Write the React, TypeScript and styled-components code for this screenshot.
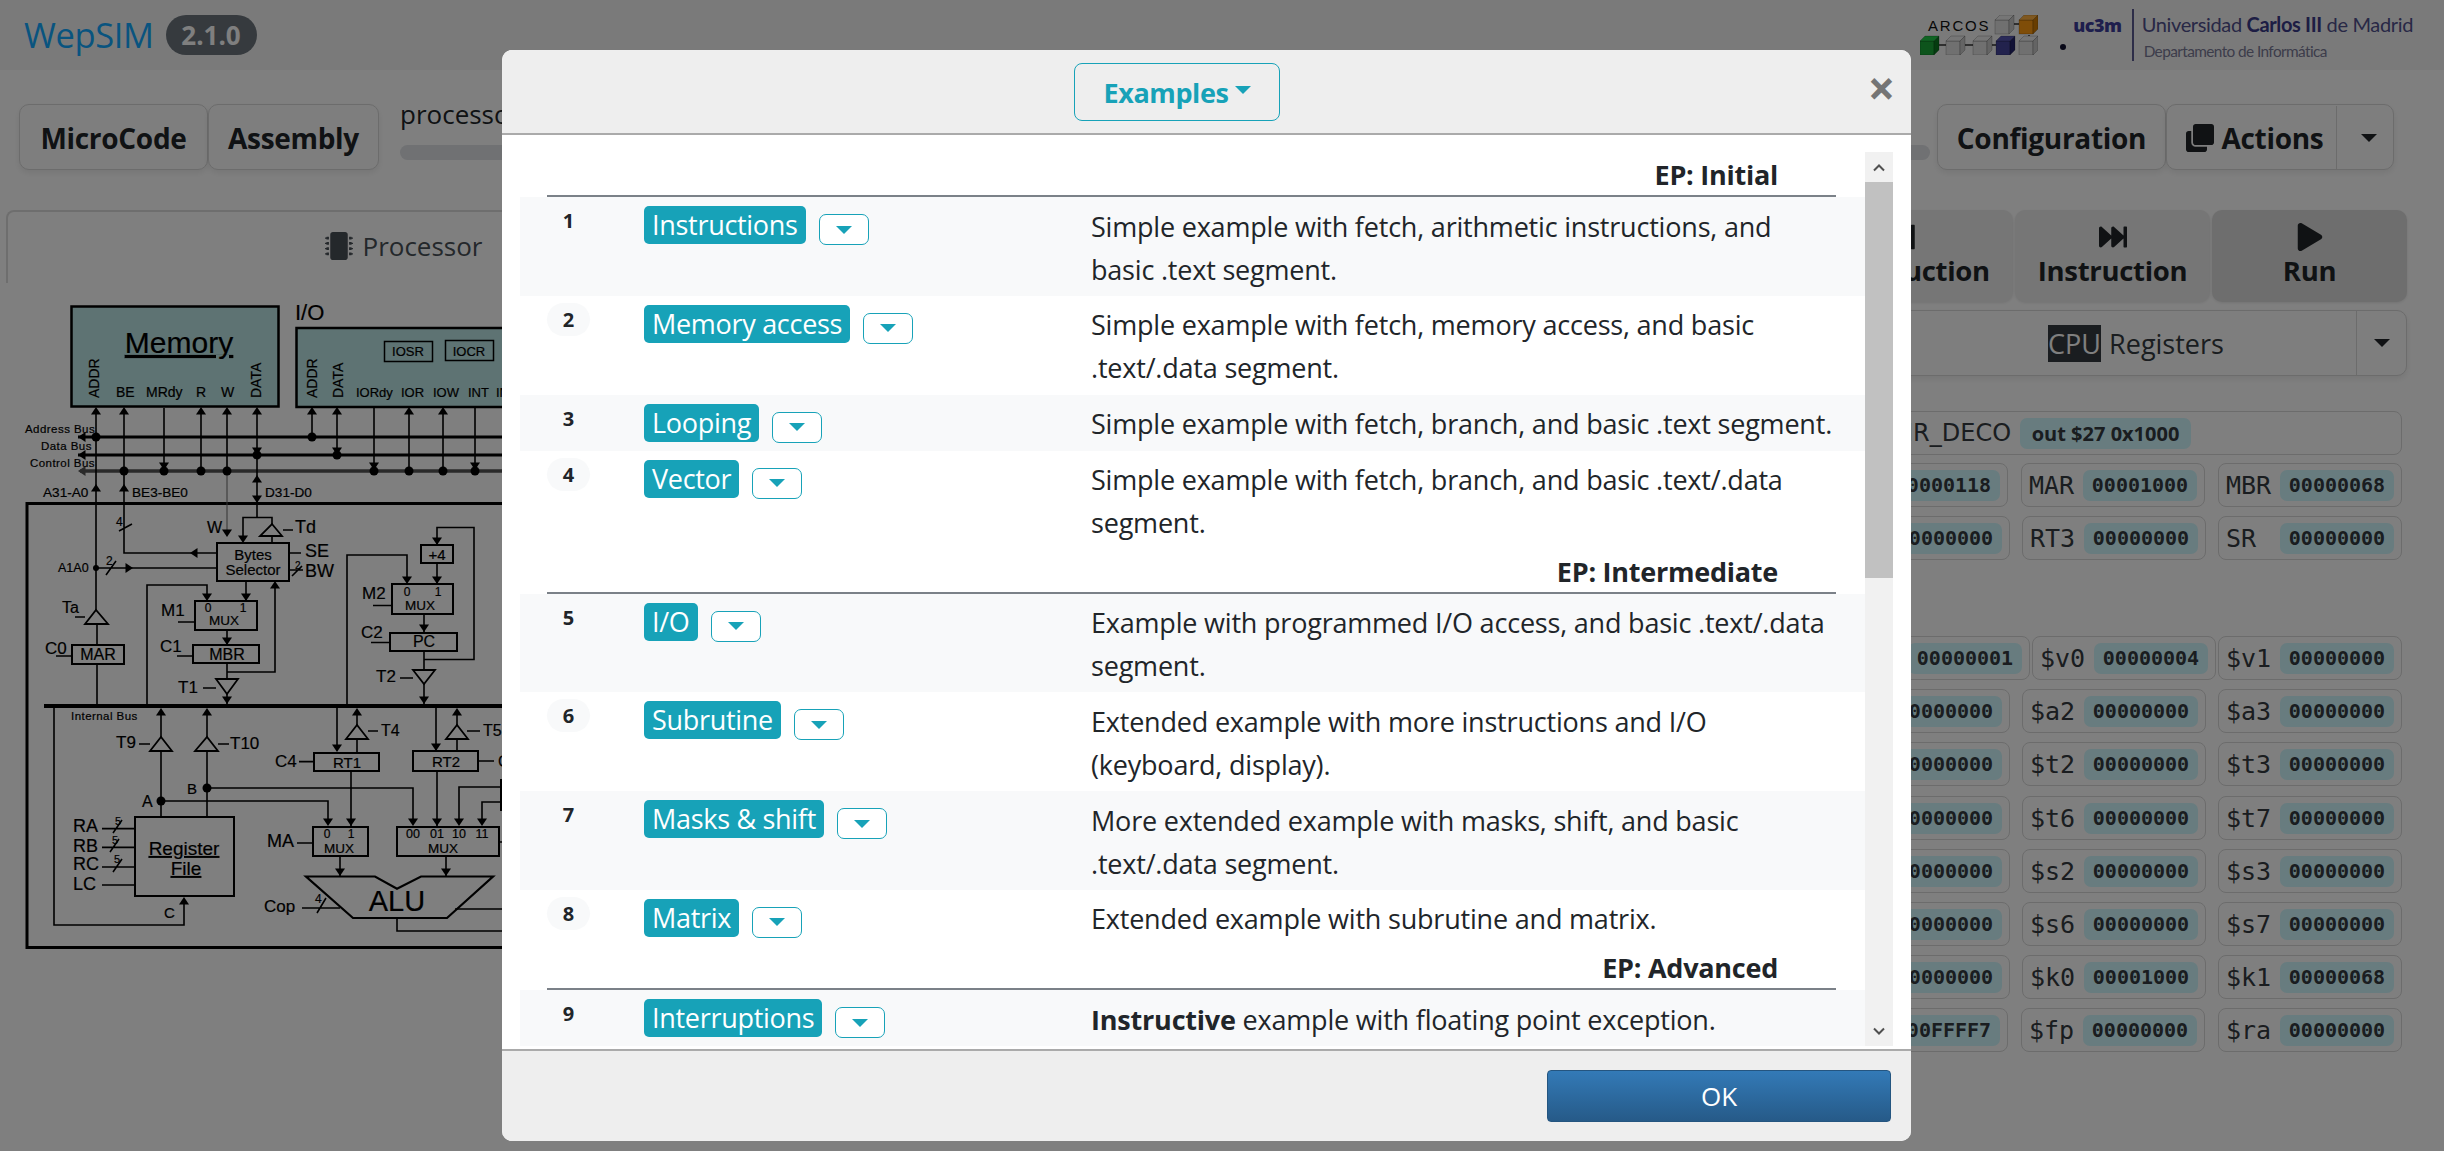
import React from "react";
import styled, { createGlobalStyle } from "styled-components";
import { FaClone, FaFastForward, FaMicrochip, FaPlay, FaStepForward } from "react-icons/fa";

const Global = createGlobalStyle`
  html, body { margin: 0; padding: 0; background: #fff; }
  body { font-family: "Open Sans", "Liberation Sans", sans-serif; color: #212529; overflow: hidden; }
  * { box-sizing: border-box; }
`;

const Page = styled.div`
  position: relative;
  width: 2444px;
  height: 1151px;
  overflow: hidden;
  background: #fff;
`;

const Header = styled.header`
  height: 70px;
  background: #f5f5f5;
  display: flex;
  align-items: center;
  justify-content: space-between;
  padding: 0 31px 0 24px;
`;
const Brand = styled.div`
  display: flex;
  align-items: center;
  gap: 12px;
`;
const BrandName = styled.span`
  font-size: 34.5px;
  color: #12a9ff;
  letter-spacing: -0.4px;
  line-height: 1;
`;
const VersionBadge = styled.span`
  width: 91px;
  height: 40px;
  border-radius: 20px;
  background: #6c757d;
  color: #fff;
  font-weight: 700;
  font-size: 26px;
  display: flex;
  align-items: center;
  justify-content: center;
`;
const Logos = styled.div`
  display: flex;
  align-items: center;
`;
const CubeLogo = styled.svg`
  display: block;
  margin-right: 22px;
`;
const Dot = styled.span`
  width: 6px;
  height: 6px;
  border-radius: 50%;
  background: #101030;
  margin: 24px 7px 0 0;
`;
const Uc3m = styled.span`
  font-family: "Open Sans", sans-serif;
  font-weight: 800;
  font-size: 18px;
  letter-spacing: -0.5px;
  color: #3c3c9a;
  margin: -21px 10px 0 0;
`;
const LogoRule = styled.span`
  width: 2px;
  height: 52px;
  background: #5a5a90;
  margin-right: 8px;
`;
const LogoText = styled.div`
  display: flex;
  flex-direction: column;
  gap: 3px;
  font-family: "Lato", sans-serif;
`;
const UniLine = styled.span`
  font-size: 20px;
  line-height: 28px;
  letter-spacing: -0.35px;
  white-space: nowrap;
  color: #50508c;
  b { color: #3a3a88; font-weight: 700; }
`;
const DeptLine = styled.span`
  font-size: 15.4px;
  line-height: 20px;
  letter-spacing: -0.6px;
  margin-left: 2px;
  white-space: nowrap;
  color: #7a7a96;
`;

const Toolbar = styled.div`
  display: flex;
  align-items: flex-start;
  margin-top: 34px;
  padding: 0 50px 0 19px;
`;
const BtnGroup = styled.div`
  display: flex;
  flex-shrink: 0;
`;
const ToolBtn = styled.div<{ $w: number }>`
  width: ${(p) => p.$w}px;
  height: 66px;
  display: flex;
  align-items: center;
  justify-content: center;
  gap: 8px;
  padding-top: 1px;
  background: #fdfdfd;
  border: 1.5px solid #d8d8d8;
  border-radius: 10px;
  box-shadow: 0 3px 6px rgba(0, 0, 0, 0.08);
  font-weight: 700;
  font-size: 28px;
  letter-spacing: -0.3px;
`;
const Progress = styled.div`
  flex: 1;
  padding: 0 7px 0 21px;
`;
const ProgressLabel = styled.div`
  font-size: 26px;
  line-height: 36px;
  margin-top: -8px;
`;
const ProgressBar = styled.div`
  height: 15px;
  margin-top: 13px;
  border-radius: 8px;
  background: #e0e2e6;
`;
const Caret = styled.span<{ $c?: string; $s?: number }>`
  display: inline-block;
  width: 0;
  height: 0;
  border-left: ${(p) => p.$s ?? 8}px solid transparent;
  border-right: ${(p) => p.$s ?? 8}px solid transparent;
  border-top: ${(p) => p.$s ?? 8}px solid ${(p) => p.$c ?? "#212529"};
`;
const ActionsMain = styled.div`
  flex: 1;
  height: 100%;
  display: flex;
  align-items: center;
  justify-content: center;
  gap: 8px;
  padding-left: 6px;
  border-right: 1.5px solid #d8d8d8;
`;
const ActionsCaret = styled.div`
  width: 48px;
  display: flex;
  align-items: center;
  justify-content: center;
`;

const Main = styled.div`
  display: flex;
  justify-content: space-between;
  margin-top: 40px;
  padding-right: 37px;
`;
const LeftPanel = styled.div`
  width: 1000px;
`;
const Tab = styled.div`
  width: 796px;
  height: 73px;
  margin-left: 6px;
  display: flex;
  align-items: center;
  justify-content: center;
  gap: 9px;
  padding-bottom: 3px;
  border: 2px solid #dcdcdc;
  border-bottom: 0;
  border-radius: 8px 8px 0 0;
  font-size: 26px;
  color: #495057;
`;
const ChipIcon = styled(FaMicrochip)`
  font-size: 28px;
  color: #495057;
`;
const Diagram = styled.svg`
  display: block;
  margin-top: 7px;
  text { font-family: "Liberation Sans", Arial, sans-serif; fill: #000; stroke: #000; stroke-width: 0.2px; }
`;

const RightPanel = styled.div`
  width: 620px;
`;
const RunRow = styled.div`
  display: flex;
  gap: 2px;
`;
const RunBtn = styled.div<{ $w: number; $bg: string; $shift?: number }>`
  width: ${(p) => p.$w}px;
  height: 92px;
  background: ${(p) => p.$bg};
  border-radius: 10px;
  box-shadow: 0 1px 3px rgba(0, 0, 0, 0.1);
  display: flex;
  flex-direction: column;
  align-items: center;
  justify-content: center;
  padding-left: ${(p) => p.$shift ?? 0}px;
  font-weight: 700;
  font-size: 27.5px;
  line-height: 38px;
  letter-spacing: -0.3px;
  svg { font-size: 28px; margin-bottom: 1px; }
`;
const SelectRow = styled.div`
  height: 66px;
  margin-top: 8px;
  border: 1.5px solid #d8d8d8;
  border-radius: 10px;
  background: #fdfdfd;
  box-shadow: 0 3px 6px rgba(0, 0, 0, 0.08);
  display: flex;
`;
const SelectMain = styled.div`
  flex: 1;
  display: flex;
  align-items: center;
  justify-content: center;
  gap: 8px;
  font-size: 27px;
  border-right: 1.5px solid #d8d8d8;
  color: #343a40;
  padding-left: 128px;
`;
const Kbd = styled.span`
  background: #343a40;
  color: #fff;
  line-height: 37px;
  width: 53px;
  text-align: center;
`;
const SelectCaret = styled.div`
  width: 49px;
  display: flex;
  align-items: center;
  justify-content: center;
`;
const RegRow = styled.div<{ $top: number; $gap: number }>`
  display: flex;
  justify-content: flex-end;
  gap: ${(p) => p.$gap}px;
  margin-top: ${(p) => p.$top}px;
  padding-right: 5px;
`;
const RegItem = styled.div<{ $w: number }>`
  width: ${(p) => p.$w}px;
  height: 44px;
  flex-shrink: 0;
  display: flex;
  align-items: center;
  justify-content: space-between;
  padding: 0 7px;
  border: 1.5px solid #d8d8d8;
  border-radius: 8px;
`;
const RegName = styled.span`
  font-family: "DejaVu Sans Mono", monospace;
  font-size: 25px;
  color: #343a40;
`;
const RegValue = styled.span`
  width: 114px;
  height: 31px;
  border-radius: 7px;
  background: #d0f8ff;
  display: flex;
  align-items: center;
  justify-content: center;
  font-family: "DejaVu Sans Mono", monospace;
  font-weight: 700;
  font-size: 20px;
  color: #343a40;
`;
const DecoItem = styled.div`
  width: 660px;
  height: 44px;
  flex-shrink: 0;
  display: flex;
  align-items: center;
  gap: 9px;
  padding-left: 163px;
  border: 1.5px solid #d8d8d8;
  border-radius: 8px;
`;
const DecoName = styled.span`
  font-family: "DejaVu Sans", sans-serif;
  font-size: 24px;
  color: #343a40;
`;
const DecoValue = styled.span`
  width: 171px;
  height: 31px;
  border-radius: 7px;
  background: #d0f8ff;
  display: flex;
  align-items: center;
  justify-content: center;
  font-weight: 700;
  font-size: 20px;
  color: #343a40;
`;

const Backdrop = styled.div`
  position: absolute;
  inset: 0;
  background: rgba(0, 0, 0, 0.5);
  display: flex;
  justify-content: flex-start;
  align-items: flex-start;
  padding: 50px 0 0 502px;
`;
const Modal = styled.div`
  width: 1409px;
  height: 1091px;
  background: #fff;
  border-radius: 10px;
  overflow: hidden;
  display: flex;
  flex-direction: column;
`;
const ModalHead = styled.div`
  height: 85px;
  flex-shrink: 0;
  background: #eee;
  border-bottom: 2px solid #aaa;
  display: flex;
  align-items: center;
`;
const HeadCenter = styled.div`
  flex: 1;
  display: flex;
  justify-content: center;
`;
const ExamplesBtn = styled.div`
  width: 206px;
  height: 58px;
  border: 1.5px solid #17a2b8;
  border-radius: 8px;
  color: #17a2b8;
  font-weight: 700;
  font-size: 27px;
  letter-spacing: -0.4px;
  display: flex;
  align-items: center;
  justify-content: center;
  gap: 6px;
  margin-top: 1px;
`;
const ExamplesCaret = styled(Caret)`
  margin-top: -5px;
`;
const Close = styled.div`
  width: 59px;
  text-align: center;
  font-size: 48px;
  font-weight: 700;
  line-height: 1;
  color: #757575;
  margin-top: -7px;
`;
const ModalBody = styled.div`
  flex: 1;
  min-height: 0;
  display: flex;
  padding: 17px 18px 3px;
`;
const Listing = styled.div`
  flex: 1;
  overflow: hidden;
`;
const GroupTitle = styled.div`
  height: 45px;
  margin: 0 29px 0 27px;
  border-bottom: 2px solid #7b8188;
  padding-right: 58px;
  text-align: right;
  font-weight: 700;
  font-size: 27px;
  line-height: 45px;
  letter-spacing: -0.25px;
`;
const Row = styled.div<{ $odd: boolean; $h: number }>`
  height: ${(p) => p.$h}px;
  padding: 7px 29px 0 27px;
  background: ${(p) => (p.$odd ? "#f8f9fa" : "#fff")};
  display: grid;
  grid-template-columns: 97px 447px 1fr;
`;
const Num = styled.div`
  width: 43px;
  height: 33px;
  border-radius: 17px;
  background: #f8f9fa;
  font-weight: 700;
  font-size: 20px;
  line-height: 34px;
  text-align: center;
`;
const ExampleCell = styled.div`
  display: flex;
  align-items: flex-start;
  gap: 13px;
  padding-top: 2px;
`;
const ExampleBtn = styled.div`
  height: 38px;
  padding: 0 8px;
  border-radius: 5px;
  background: #17a2b8;
  color: #fff;
  font-size: 27px;
  line-height: 37px;
  letter-spacing: -0.3px;
  white-space: nowrap;
`;
const ExampleToggle = styled.div`
  width: 50px;
  height: 31px;
  margin-top: 8px;
  border: 1.5px solid #17a2b8;
  border-radius: 7px;
  background: #fff;
  display: flex;
  align-items: center;
  justify-content: center;
`;
const Desc = styled.div`
  font-size: 27px;
  line-height: 43px;
  letter-spacing: -0.2px;
  padding-top: 0.5px;
`;
const Scrollbar = styled.div`
  width: 28px;
  flex-shrink: 0;
  background: #f1f1f1;
  display: flex;
  flex-direction: column;
`;
const ScrollArrow = styled.div<{ $grow?: boolean }>`
  height: 30px;
  flex-shrink: 0;
  margin-top: ${(p) => (p.$grow ? "auto" : "0")};
  display: flex;
  align-items: center;
  justify-content: center;
`;
const ScrollThumb = styled.div`
  height: 396px;
  background: #c1c1c1;
`;
const ModalFoot = styled.div`
  height: 92px;
  flex-shrink: 0;
  background: #eee;
  border-top: 2px solid #aaa;
  display: flex;
  justify-content: flex-end;
  padding: 19px 20px 0 0;
`;
const OkBtn = styled.div`
  width: 344px;
  height: 52px;
  border-radius: 4px;
  background: linear-gradient(#337ab7, #265a88);
  border: 1px solid #245580;
  color: #fff;
  font-size: 26px;
  line-height: 50px;
  text-align: center;
`;

/* ---------- logo ---------- */
const Cube = ({ x, y, f, t, s }: { x: number; y: number; f: string; t: string; s: string }) => (
  <g transform={`translate(${x} ${y})`} stroke="#00000055" strokeWidth="0.6">
    <rect x="0" y="5" width="14" height="14" fill={f} />
    <polygon points="0,5 5,0 19,0 14,5" fill={t} />
    <polygon points="14,5 19,0 19,14 14,19" fill={s} />
  </g>
);
const gray = { f: "#e0e0e0", t: "#ececec", s: "#c8c8c8" };
const CubesLogo = () => (
  <CubeLogo width="118" height="40" viewBox="0 0 118 40">
    <text x="8" y="16" fontFamily="Liberation Sans, sans-serif" fontSize="15" letterSpacing="1.8" fill="#101010">ARCOS</text>
    <path d="M94 9h6M19 30h7M44 30h9M71 30h6M109 20v3" stroke="#303030" strokeWidth="1.4" fill="none" />
    <Cube x={75} y={0} {...gray} />
    <Cube x={99} y={0} f="#ff9a10" t="#ffb040" s="#d07a00" />
    <Cube x={0} y={21} f="#1aa838" t="#22c848" s="#0a7820" />
    <Cube x={26} y={21} {...gray} />
    <Cube x={53} y={21} {...gray} />
    <Cube x={76} y={21} f="#44449a" t="#5555b0" s="#22226a" />
    <Cube x={99} y={21} {...gray} />
  </CubeLogo>
);

/* ---------- diagram ---------- */
type D = "u" | "d" | "l" | "r";
const arrow = (x: number, y: number, d: D, s = 5) => {
  const h = s * 1.5;
  if (d === "d") return `${x - s},${y - h} ${x + s},${y - h} ${x},${y}`;
  if (d === "u") return `${x - s},${y + h} ${x + s},${y + h} ${x},${y}`;
  if (d === "l") return `${x + h},${y - s} ${x + h},${y + s} ${x},${y}`;
  return `${x - h},${y - s} ${x - h},${y + s} ${x},${y}`;
};
const ARROWS: [number, number, D][] = [
  [96, 407, "u"], [124, 407, "u"], [164, 470, "d"], [201, 407, "u"], [227, 407, "u"], [257, 407, "u"],
  [257, 455, "d"], [312, 407, "u"], [337, 407, "u"], [337, 455, "d"], [374, 470, "d"], [409, 407, "u"],
  [443, 407, "u"], [475, 470, "d"], [96, 484, "u"], [124, 484, "u"], [257, 475, "u"], [257, 503, "d"],
  [243, 543, "d"], [227, 537, "d"], [190, 553, "l"], [133, 568, "r"], [246, 601, "d"], [207, 601, "d"],
  [227, 645, "d"], [275, 581, "u"], [227, 704, "d"], [437, 545, "d"], [437, 584, "d"], [407, 584, "d"],
  [424, 632, "d"], [424, 704, "d"], [161, 708, "u"], [207, 708, "u"], [337, 752, "d"], [357, 708, "u"],
  [436, 751, "d"], [457, 708, "u"], [328, 826, "d"], [351, 826, "d"], [413, 826, "d"], [437, 826, "d"],
  [459, 826, "d"], [482, 826, "d"], [340, 876, "d"], [446, 876, "d"], [184, 897, "u"],
];
const DOTS: [number, number, number][] = [
  [96, 437, 4.5], [257, 455, 4.5], [124, 471, 4.5], [164, 471, 4.5], [201, 471, 4.5], [227, 471, 4.5],
  [312, 437, 4.5], [337, 455, 4.5], [374, 471, 4.5], [409, 471, 4.5], [443, 471, 4.5], [475, 471, 4.5],
  [96, 568, 3], [161, 801, 4.5], [207, 788, 4.5],
];
const WIRES = [
  "M96 410V610", "M124 410V553H217", "M164 408V471", "M201 410V471", "M227 410V471", "M257 410V517",
  "M312 410V437", "M337 410V455", "M374 407V471", "M409 410V471", "M443 410V471", "M475 407V471",
  "M243 538V517.5H272V524", "M272 536V543", "M283 530H293", "M289 553H301", "M289 570H303",
  "M96 568H217", "M246 581V601", "M147 706V585H207V596", "M227 630V645", "M227 663V679", "M227 672H275V585",
  "M227 694V704", "M75 617H85", "M97 624V645", "M97 664V706", "M56 656H72", "M178 622H195", "M177 656H193",
  "M203 688H216", "M437 545V527.5H474V659.5H424", "M437 563V584", "M347 706V555H407V580", "M424 613V632",
  "M373 605.5H392", "M371 642.5H390", "M424 650V670", "M424 684V704", "M400 678H413",
  "M161 712V737", "M161 751V817", "M207 712V737", "M207 751V817", "M139 744H150", "M218 744H229",
  "M161 801H328V822", "M207 788H413V822", "M54 706V925H184V900", "M102 828.6H135", "M102 847.4H135", "M102 867H135", "M102 885H135",
  "M337 706V750", "M357 712V725", "M357 739V753", "M368 731H378", "M299 761.6H314", "M351 771V826",
  "M436 706V750", "M457 712V725", "M457 739V751", "M467 731H480", "M478 761H494", "M437 770V826",
  "M459 822V787H502", "M482 822V802H502", "M340 856V876", "M446 856V876", "M297 843H313",
  "M302 908H340", "M397 918V931H520", "M455 909H520", "M499 842H520",
  "M119 531L132 524", "M106 575L116 561", "M292 576L302 566", "M113 833L122 820", "M110 852L119 839", "M113 872L122 859", "M317 913L326 898",
];
const BOXES: [number, number, number, number][] = [
  [217, 543, 72, 38], [195, 601, 62, 29], [193, 645, 66, 18], [72, 645, 52, 19], [421, 545, 32, 18],
  [392, 584, 61, 30], [390, 633, 67, 18], [314, 753, 65, 18], [413, 751, 65, 20], [135, 817, 99, 79],
  [313, 827, 55, 29], [397, 827, 102, 29], [501, 780, 20, 30],
];
const TRIS = [
  "260,536 282,536 272,524", "85,624 108,624 96,610", "216,679 238,679 227,694", "413,670 435,670 424,684",
  "150,751 172,751 161,737", "195,751 218,751 207,737", "346,739 368,739 357,725", "446,739 468,739 457,725",
];
type T = [string, number, number, number, ("start" | "middle")?, number?];
const TEXTS: T[] = [
  ["Address Bus", 25, 429, 11.5, "start", 0.45], ["Data Bus", 41, 446, 11.5, "start", 0.45], ["Control Bus", 30, 463, 11.5, "start", 0.45],
  ["A31-A0", 43, 492, 13.6], ["BE3-BE0", 132, 492, 13.6], ["D31-D0", 265, 492, 13.6],
  ["W", 207, 527, 16], ["4", 116, 522, 12], ["Td", 295, 527, 18], ["SE", 305, 551, 18], ["BW", 305, 571, 18],
  ["2", 106, 561, 12], ["2", 295, 565, 10], ["A1A0", 58, 568, 12.5],
  ["Bytes", 253, 554, 15, "middle"], ["Selector", 253, 569, 15, "middle"],
  ["Ta", 62, 607, 16], ["C0", 45, 648, 17], ["MAR", 98, 654.5, 16, "middle"],
  ["M1", 161, 610, 17], ["0", 208, 608, 12, "middle"], ["1", 243, 608, 12, "middle"], ["MUX", 224, 620, 13.5, "middle"],
  ["C1", 160, 646, 17], ["MBR", 227, 654, 16, "middle"], ["T1", 178, 687, 17],
  ["+4", 437, 554, 15, "middle"], ["M2", 362, 593, 17], ["0", 407, 592, 12, "middle"], ["1", 438, 592, 12, "middle"], ["MUX", 420, 605, 13.5, "middle"],
  ["C2", 361, 632, 17], ["PC", 424, 641, 16, "middle"], ["T2", 376, 676, 17],
  ["Internal Bus", 71, 716, 11.5, "start", 0.45], ["T9", 116, 742, 17], ["T10", 230, 743, 17], ["T4", 381, 730, 16], ["T5", 483, 730, 16],
  ["C4", 275, 761, 17], ["RT1", 347, 762, 15, "middle"], ["RT2", 446, 761, 15, "middle"], ["C", 498, 761, 16],
  ["A", 142, 801, 16], ["B", 187, 788, 15], ["RA", 73, 826, 18], ["RB", 73, 846, 18], ["RC", 73, 864, 18], ["LC", 73, 884, 18],
  ["5", 115, 821, 11], ["5", 112, 840, 11], ["5", 114, 859, 11],
  ["MA", 267, 841, 18], ["0", 327, 834, 12, "middle"], ["1", 351, 834, 12, "middle"], ["MUX", 339, 848.5, 13.5, "middle"],
  ["00", 413, 833.5, 12.5, "middle"], ["01", 437, 833.5, 12.5, "middle"], ["10", 459, 833.5, 12.5, "middle"], ["11", 482, 833.5, 12.5, "middle"], ["MUX", 443, 848.5, 13.5, "middle"],
  ["ALU", 397, 901, 29, "middle"], ["Cop", 264, 906, 17], ["4", 315, 899, 12], ["C", 164, 912, 15],
  ["BE", 116, 392, 14], ["MRdy", 146, 392, 14], ["R", 196, 392, 14], ["W", 221, 392, 14],
  ["IOSR", 408, 351.5, 13, "middle"], ["IOCR", 469, 351, 13, "middle"],
  ["IORdy", 356, 392, 13], ["IOR", 401, 392, 13], ["IOW", 433, 392, 13], ["INT", 468, 392, 13], ["INTA", 496, 392, 13],
  ["I/O", 295, 312, 22],
];
const VTEXTS: [string, number, number][] = [["ADDR", 94, 398], ["DATA", 256, 398], ["ADDR", 312, 398], ["DATA", 338, 398]];

const Cpu = () => (
  <Diagram width="520" height="660" viewBox="0 290 520 660">
    <rect x="71.5" y="306.5" width="207" height="100" fill="#bde6e6" stroke="#000" strokeWidth="2.5" />
    <rect x="296.5" y="328" width="240" height="79" fill="#bde6e6" stroke="#000" strokeWidth="2.5" />
    <rect x="384.5" y="341.5" width="48" height="20" fill="none" stroke="#000" strokeWidth="1.5" />
    <rect x="445.5" y="340.5" width="48" height="20" fill="none" stroke="#000" strokeWidth="1.5" />
    <text x="179" y="353" fontSize="30" textAnchor="middle" textDecoration="underline">Memory</text>
    <path d="M78 437H520M78 455H520" stroke="#000" strokeWidth="3" fill="none" />
    <path d="M80 471H520" stroke="#555" strokeWidth="3.5" fill="none" />
    <polygon points={arrow(78, 437, "l", 5)} fill="#000" />
    <polygon points={arrow(78, 455, "l", 5)} fill="#000" />
    <polygon points={arrow(78, 471, "l", 5)} fill="#555" />
    <rect x="27" y="503.5" width="520" height="444" fill="none" stroke="#000" strokeWidth="3" />
    <path d="M44 706H520" stroke="#000" strokeWidth="4" fill="none" />
    <path d="M227 471V530" stroke="#666" strokeWidth="1" fill="none" />
    <path d={WIRES.join("")} stroke="#000" strokeWidth="1.6" fill="none" />
    {BOXES.map(([x, y, w, h], i) => (
      <rect key={i} x={x} y={y} width={w} height={h} fill="none" stroke="#000" strokeWidth="2" />
    ))}
    {TRIS.map((p, i) => (
      <polygon key={i} points={p} fill="none" stroke="#000" strokeWidth="1.8" />
    ))}
    {ARROWS.map(([x, y, d], i) => (
      <polygon key={i} points={arrow(x, y, d)} fill="#000" />
    ))}
    {DOTS.map(([x, y, r], i) => (
      <circle key={i} cx={x} cy={y} r={r} fill="#000" />
    ))}
    <polygon points="306,876.5 375,876.5 397,888.7 421,876.5 493,876.5 447,918 353,918" fill="none" stroke="#000" strokeWidth="2.2" />
    <text x="184" y="855" fontSize="19" textAnchor="middle" textDecoration="underline">Register</text>
    <text x="186" y="875" fontSize="19" textAnchor="middle" textDecoration="underline">File</text>
    {TEXTS.map(([s, x, y, size, anchor, ls], i) => (
      <text key={i} x={x} y={y} fontSize={size} textAnchor={anchor ?? "start"} letterSpacing={ls} dominantBaseline="central">
        {s}
      </text>
    ))}
    {VTEXTS.map(([s, x, y], i) => (
      <text key={i} x={x} y={y} fontSize="14" dominantBaseline="central" transform={`rotate(-90 ${x} ${y})`}>
        {s}
      </text>
    ))}
  </Diagram>
);

/* ---------- data ---------- */
type Reg = [string, string];
const REG_ROWS: { top: number; gap: number; cells: Reg[] }[] = [
  { top: 8, gap: 13, cells: [["PC", "00000118"], ["MAR", "00001000"], ["MBR", "00000068"]] },
  { top: 9, gap: 12, cells: [["RT2", "00000000"], ["RT3", "00000000"], ["SR", "00000000"]] },
  { top: 76, gap: 2, cells: [["$at", "00000001"], ["$v0", "00000004"], ["$v1", "00000000"]] },
  { top: 9, gap: 12, cells: [["$a1", "00000000"], ["$a2", "00000000"], ["$a3", "00000000"]] },
  { top: 9, gap: 12, cells: [["$t1", "00000000"], ["$t2", "00000000"], ["$t3", "00000000"]] },
  { top: 10, gap: 12, cells: [["$t5", "00000000"], ["$t6", "00000000"], ["$t7", "00000000"]] },
  { top: 9, gap: 12, cells: [["$s1", "00000000"], ["$s2", "00000000"], ["$s3", "00000000"]] },
  { top: 9, gap: 12, cells: [["$s5", "00000000"], ["$s6", "00000000"], ["$s7", "00000000"]] },
  { top: 9, gap: 12, cells: [["$t9", "00000000"], ["$k0", "00001000"], ["$k1", "00000068"]] },
  { top: 9, gap: 13, cells: [["$sp", "000FFFF7"], ["$fp", "00000000"], ["$ra", "00000000"]] },
];

type Example =
  | { group: string }
  | { n: number; name: string; h: number; desc: React.ReactNode };
const EXAMPLES: Example[] = [
  { group: "EP: Initial" },
  { n: 1, name: "Instructions", h: 98.5, desc: "Simple example with fetch, arithmetic instructions, and basic .text segment." },
  { n: 2, name: "Memory access", h: 99, desc: "Simple example with fetch, memory access, and basic .text/.data segment." },
  { n: 3, name: "Looping", h: 56, desc: "Simple example with fetch, branch, and basic .text segment." },
  { n: 4, name: "Vector", h: 98, desc: "Simple example with fetch, branch, and basic .text/.data segment." },
  { group: "EP: Intermediate" },
  { n: 5, name: "I/O", h: 98.5, desc: "Example with programmed I/O access, and basic .text/.data segment." },
  { n: 6, name: "Subrutine", h: 99, desc: "Extended example with more instructions and I/O (keyboard, display)." },
  { n: 7, name: "Masks & shift", h: 98.5, desc: "More extended example with masks, shift, and basic .text/.data segment." },
  { n: 8, name: "Matrix", h: 55.5, desc: "Extended example with subrutine and matrix." },
  { group: "EP: Advanced" },
  { n: 9, name: "Interruptions", h: 58, desc: <><b>Instructive</b> example with floating point exception.</> },
];

const Chevron = ({ up }: { up?: boolean }) => (
  <svg width="14" height="9" viewBox="0 0 14 9">
    <path d={up ? "M2 7.5L7 2.5L12 7.5" : "M2 1.5L7 6.5L12 1.5"} fill="none" stroke="#505050" strokeWidth="2" />
  </svg>
);

export default function App() {
  return (
    <Page>
      <Global />
      <Header>
        <Brand>
          <BrandName>WepSIM</BrandName>
          <VersionBadge>2.1.0</VersionBadge>
        </Brand>
        <Logos>
          <CubesLogo />
          <Dot />
          <Uc3m>uc3m</Uc3m>
          <LogoRule />
          <LogoText>
            <UniLine>Universidad <b>Carlos III</b> de Madrid</UniLine>
            <DeptLine>Departamento de Informática</DeptLine>
          </LogoText>
        </Logos>
      </Header>

      <Toolbar>
        <BtnGroup>
          <ToolBtn $w={189}>MicroCode</ToolBtn>
          <ToolBtn $w={171}>Assembly</ToolBtn>
        </BtnGroup>
        <Progress>
          <ProgressLabel>processor</ProgressLabel>
          <ProgressBar />
        </Progress>
        <BtnGroup>
          <ToolBtn $w={229}>Configuration</ToolBtn>
          <ToolBtn $w={228}>
            <ActionsMain>
              <FaClone size={28} />
              Actions
            </ActionsMain>
            <ActionsCaret>
              <Caret />
            </ActionsCaret>
          </ToolBtn>
        </BtnGroup>
      </Toolbar>

      <Main>
        <LeftPanel>
          <Tab>
            <ChipIcon />
            Processor
          </Tab>
          <Cpu />
        </LeftPanel>
        <RightPanel>
          <RunRow>
            <RunBtn $w={226} $bg="#ececec" $shift={12}>
              <FaStepForward />
              µInstruction
            </RunBtn>
            <RunBtn $w={195} $bg="#ececec">
              <FaFastForward />
              Instruction
            </RunBtn>
            <RunBtn $w={195} $bg="#dcdcdc">
              <FaPlay />
              Run
            </RunBtn>
          </RunRow>
          <SelectRow>
            <SelectMain>
              <Kbd>CPU</Kbd>
              Registers
            </SelectMain>
            <SelectCaret>
              <Caret />
            </SelectCaret>
          </SelectRow>
          <RegRow $top={35} $gap={0}>
            <DecoItem>
              <DecoName>IR_DECO</DecoName>
              <DecoValue>out $27 0x1000</DecoValue>
            </DecoItem>
          </RegRow>
          {REG_ROWS.map((r, i) => (
            <RegRow key={i} $top={r.top} $gap={r.gap}>
              {r.cells.map(([n, v]) => (
                <RegItem key={n} $w={184}>
                  <RegName>{n}</RegName>
                  <RegValue>{v}</RegValue>
                </RegItem>
              ))}
            </RegRow>
          ))}
        </RightPanel>
      </Main>

      <Backdrop>
        <Modal>
          <ModalHead>
            <HeadCenter>
              <ExamplesBtn>
                Examples
                <ExamplesCaret $c="#17a2b8" />
              </ExamplesBtn>
            </HeadCenter>
            <Close>×</Close>
          </ModalHead>
          <ModalBody>
            <Listing>
              {EXAMPLES.map((e) =>
                "group" in e ? (
                  <GroupTitle key={e.group}>{e.group}</GroupTitle>
                ) : (
                  <Row key={e.n} $odd={e.n % 2 === 1} $h={e.h}>
                    <Num>{e.n}</Num>
                    <ExampleCell>
                      <ExampleBtn>{e.name}</ExampleBtn>
                      <ExampleToggle>
                        <Caret $c="#17a2b8" />
                      </ExampleToggle>
                    </ExampleCell>
                    <Desc>{e.desc}</Desc>
                  </Row>
                ),
              )}
            </Listing>
            <Scrollbar>
              <ScrollArrow>
                <Chevron up />
              </ScrollArrow>
              <ScrollThumb />
              <ScrollArrow $grow>
                <Chevron />
              </ScrollArrow>
            </Scrollbar>
          </ModalBody>
          <ModalFoot>
            <OkBtn>OK</OkBtn>
          </ModalFoot>
        </Modal>
      </Backdrop>
    </Page>
  );
}
